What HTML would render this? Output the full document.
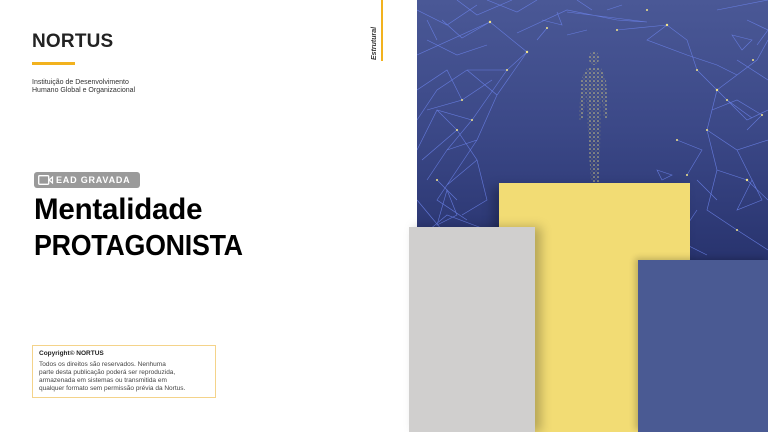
<!DOCTYPE html>
<html><head><meta charset="utf-8"><style>
*{margin:0;padding:0;box-sizing:border-box}
body{width:768px;height:432px;overflow:hidden;background:#fff;position:relative;font-family:"Liberation Sans",sans-serif}
.a{position:absolute}
</style></head><body>
<div class="a" style="left:32px;top:31px;font-size:19px;font-weight:bold;color:#222;letter-spacing:0.2px">NORTUS</div>
<div class="a" style="left:32px;top:62px;width:43px;height:3px;background:#f2b21e"></div>
<div class="a" style="left:32px;top:79px;font-size:7px;line-height:8px;color:#333">Instituição de Desenvolvimento<br>Humano Global e Organizacional</div>
<div class="a" style="left:381px;top:0;width:2px;height:61px;background:#f2b21e"></div>
<div class="a" style="left:371px;top:60px;transform:rotate(-90deg);transform-origin:0 0;font-size:7px;font-style:italic;font-weight:bold;color:#333">Estrutural</div>
<div class="a" style="left:34px;top:172px;width:106px;height:16px;background:#9a9a9a;border-radius:3px;color:#fff;font-size:9px;font-weight:bold;letter-spacing:0.8px;line-height:16px;padding-left:22px">EAD GRAVADA</div>
<svg class="a" style="left:38px;top:175px" width="16" height="10"><rect x="0.7" y="0.7" width="10" height="8.6" rx="1" fill="none" stroke="#fff" stroke-width="1.3"/><path d="M11 5 L14.5 2 V8 Z" fill="none" stroke="#fff" stroke-width="1.2"/></svg>
<div class="a" style="left:34px;top:192px;font-size:29.5px;font-weight:bold;color:#000;line-height:36px;letter-spacing:-0.2px;white-space:nowrap">Mentalidade</div>
<div class="a" style="left:34px;top:228px;font-size:29px;font-weight:bold;color:#000;line-height:36px;letter-spacing:-0.3px;white-space:nowrap;transform:scaleX(0.925);transform-origin:0 0">PROTAGONISTA</div>
<div class="a" style="left:32px;top:345px;width:184px;height:53px;border:1px solid #f4d38a;padding:4px 0 0 6px;font-size:6.5px;line-height:7.9px;color:#444"><b style="color:#222">Copyright© NORTUS</b><div style="margin-top:3px">Todos os direitos são reservados. Nenhuma<br>parte desta publicação poderá ser reproduzida,<br>armazenada em sistemas ou transmitida em<br>qualquer formato sem permissão prévia da Nortus.</div></div>
<svg class="a" style="left:417px;top:0" width="351" height="262">
<defs><linearGradient id="g" x1="0" y1="0" x2="0" y2="1"><stop offset="0" stop-color="#4a5896"/><stop offset="0.5" stop-color="#3b4887"/><stop offset="1" stop-color="#28336e"/></linearGradient>
<pattern id="d" width="4" height="4" patternUnits="userSpaceOnUse"><circle cx="1" cy="1" r="0.8" fill="#e8dc80"/><circle cx="3" cy="3" r="0.5" fill="#b8b070"/></pattern></defs>
<rect width="351" height="262" fill="url(#g)"/>
<g stroke="#6a80e6" stroke-width="0.6" fill="none" opacity="0.9">
<path d="M0 55 L73 22 L110 52 L90 70 L50 70 L20 90 L0 120 M73 22 L45 38 L25 20 M110 52 L80 95 L50 70 M90 70 L55 120 L20 110 L0 150 M55 120 L30 150 L10 180 M80 95 L60 140 L30 150 M60 140 L20 200 L50 220 M20 180 L40 200 M0 200 L25 230 M0 90 L30 70 L45 100 L10 110 M45 100 L75 80 M20 110 L40 130 L5 160 M40 130 L60 160 L30 185 M60 160 L70 200 L45 215 M0 240 L30 215 L70 230 M10 40 L40 55 L70 45"/>
<path d="M40 0 L60 15 L95 0 M70 0 L100 12 L120 0 M0 10 L30 25 L60 5"/>
<path d="M100 33 L150 10 L200 20 L230 22 L150 12 M120 40 L130 28 M140 12 L145 25 L125 20 M190 10 L205 5 M150 35 L170 30"/>
<path d="M200 30 L250 25 L270 40 L280 70 L300 90 L320 75 L340 60 L351 40 M250 25 L230 40 L270 55 M280 70 L310 100 L330 120 L351 110 M300 90 L290 130 L320 150 L351 140 M310 100 L335 118 M290 130 L300 170 L330 180 L351 200 M300 170 L290 210 L320 230 L351 250 M320 150 L340 190 M300 10 L351 0 M320 60 L351 80 M280 180 L300 200 M270 55 L300 65 L320 75 M295 110 L320 100 L345 115 L330 130 M260 140 L285 150 L270 175 M280 210 L260 240 L290 255 M330 20 L351 30 L340 45 M315 35 L335 40 L325 50 Z"/>
<path d="M320 210 L335 180 L345 200 Z M10 20 L20 40 M160 0 L175 10 M30 190 L40 215 L20 225 Z M95 230 L110 225 L100 240 M240 170 L255 175 L245 180 Z"/>
</g>
<g fill="#f3e48a">
<circle cx="73" cy="22" r="1.2"/><circle cx="110" cy="52" r="1.2"/><circle cx="90" cy="70" r="1"/><circle cx="55" cy="120" r="1"/><circle cx="250" cy="25" r="1.2"/><circle cx="300" cy="90" r="1.2"/><circle cx="290" cy="130" r="1"/><circle cx="330" cy="180" r="1.2"/><circle cx="200" cy="30" r="1"/><circle cx="230" cy="10" r="1"/><circle cx="310" cy="100" r="1"/><circle cx="320" cy="230" r="1"/><circle cx="20" cy="180" r="1"/><circle cx="130" cy="28" r="1"/><circle cx="280" cy="70" r="1"/><circle cx="45" cy="100" r="1"/><circle cx="40" cy="130" r="1"/><circle cx="345" cy="115" r="1"/><circle cx="260" cy="140" r="1"/><circle cx="270" cy="175" r="1"/><circle cx="336" cy="60" r="1"/>
</g>
<g fill="url(#d)" opacity="0.85">
<ellipse cx="177" cy="58" rx="5" ry="7"/>
<path d="M170 68 L184 68 L189 80 L191 118 L187 118 L184 92 L183 150 L182 182 L174 182 L172 150 L169 92 L166 120 L162 120 L164 80 Z"/>
</g>
</svg>
<div class="a" style="left:499px;top:183px;width:191px;height:249px;background:#f2dc74;box-shadow:-6px 4px 10px rgba(0,0,0,0.25)"></div>
<div class="a" style="left:409px;top:227px;width:126px;height:205px;background:#d0cfce;box-shadow:6px 0 10px rgba(0,0,0,0.25)"></div>
<div class="a" style="left:638px;top:260px;width:130px;height:172px;background:#4a5a93;box-shadow:-3px -2px 6px rgba(0,0,0,0.2)"></div>
</body></html>
